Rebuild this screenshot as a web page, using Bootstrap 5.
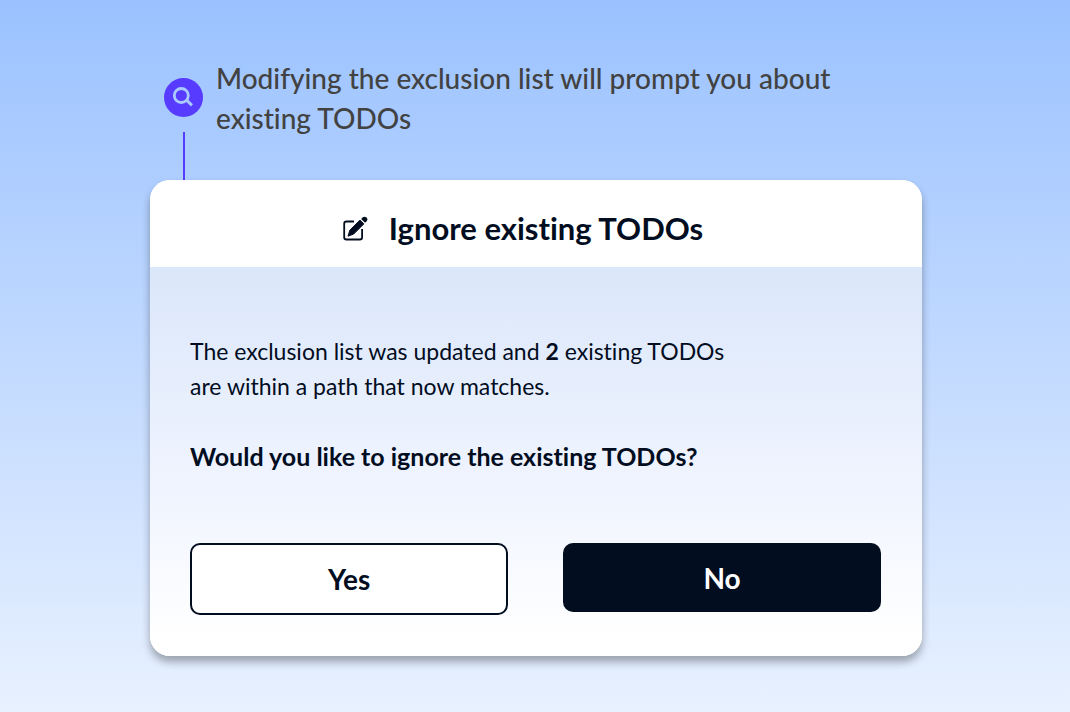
<!DOCTYPE html>
<html lang="en">
<head>
<meta charset="utf-8">
<meta name="viewport" content="width=device-width, initial-scale=1">
<title>Ignore existing TODOs</title>
<link href="https://cdn.jsdelivr.net/npm/bootstrap@5.3.0/dist/css/bootstrap.min.css" rel="stylesheet">
<style>
  body {
    font-family: Lato, "Liberation Sans", sans-serif;
    font-variant-ligatures: none;
    color: #020d1f;
    background: linear-gradient(#9bc2ff, #e8f1ff) no-repeat;
    padding-left: 2px;
  }
  .stage { max-width: 772px; padding-top: 58px; }
  .hint { padding-left: 14px; gap: 13px; }
  .hint-marker { width: 39px; padding-top: 20px; gap: 15px; }
  .hint-line { width: 2px; background: #573bff; }
  .hint-text { font-size: 28px; line-height: 40px; font-weight: 500; color: #424242; max-width: 640px; padding-bottom: 42px; }
  .dialog-card { border-radius: 20px; box-shadow: 0 6px 8px rgba(0, 0, 0, .32); }
  .dialog-head { height: 87px; gap: 21px; padding: 9px 26px 0 0; }
  .dialog-title { font-size: 31px; line-height: 40px; font-weight: 700; }
  .dialog-body { padding: 67px 41px 41px 40px; background: linear-gradient(#dbe7fa, #f1f5ff 60%, #fff 95%); }
  .dialog-text { font-size: 23px; line-height: 35px; margin-bottom: 69px; }
  .dialog-question { font-size: 25px; }
  .choices { gap: 55px; }
  .choice { height: 69px; border-radius: 10px; font-size: 28px; line-height: 36px; font-weight: 700; padding: 0; }
  .choice-yes, .choice-yes:hover { height: 72px; background: #fff; color: #020d1f; border: 2px solid #020d1f; }
  .choice-no, .choice-no:hover { background: #020d1f; color: #fff; border: 0; }
</style>
</head>
<body class="min-vh-100">
<main class="stage mx-auto">
  <div class="hint d-flex">
    <div class="hint-marker d-flex flex-column align-items-center flex-shrink-0">
      <svg width="39" height="39" viewBox="0 0 39 39" fill="none" class="flex-shrink-0" aria-hidden="true">
        <circle cx="19.500" cy="19.500" r="19.500" fill="#573bff"/>
        <circle cx="17.300" cy="17.500" r="7" stroke="#a9c9ff" stroke-width="2.800"/>
        <path d="M22.500 22.200L28 27.300" stroke="#a9c9ff" stroke-width="3"/>
      </svg>
      <span class="hint-line flex-grow-1"></span>
    </div>
    <p class="hint-text mb-0">Modifying the exclusion list will prompt you about<br>existing TODOs</p>
  </div>
  <section class="dialog-card card border-0 overflow-hidden" aria-labelledby="dialog-title">
    <header class="dialog-head d-flex align-items-center justify-content-center bg-white">
      <svg width="25" height="25" viewBox="0 0 25 25" fill="none" aria-hidden="true">
        <path d="M11 5.500H3.500Q1.200 5.500 1.200 7.800V21.200Q1.200 23.500 3.500 23.500H16.800Q19.100 23.500 19.100 21.200V13" stroke="#020d1f" stroke-width="1.800"/>
        <path d="M5 20.200L6.800 14.300L17 4.100L20.800 7.900L10.600 18.100Z" fill="#020d1f" stroke="#020d1f" stroke-linejoin="round"/>
        <path d="M18.200 2.900L19.500 1.600Q21.500-.2 23.500 1.500Q25.300 3.500 23.400 5.500L22 6.700Z" fill="#020d1f"/>
      </svg>
      <h1 id="dialog-title" class="dialog-title mb-0">Ignore existing TODOs</h1>
    </header>
    <div class="dialog-body">
      <div class="dialog-text">
        <p class="mb-0">The exclusion list was updated and <strong>2</strong> existing TODOs<br>are within a path that now matches.</p>
        <br>
        <p class="dialog-question mb-0"><strong>Would you like to ignore the existing TODOs?</strong></p>
      </div>
      <div class="choices d-flex align-items-start">
        <button type="button" class="choice choice-yes btn flex-fill w-50">Yes</button>
        <button type="button" class="choice choice-no btn flex-fill w-50">No</button>
      </div>
    </div>
  </section>
</main>
<script src="https://cdn.jsdelivr.net/npm/bootstrap@5.3.0/dist/js/bootstrap.bundle.min.js"></script>
</body>
</html>
